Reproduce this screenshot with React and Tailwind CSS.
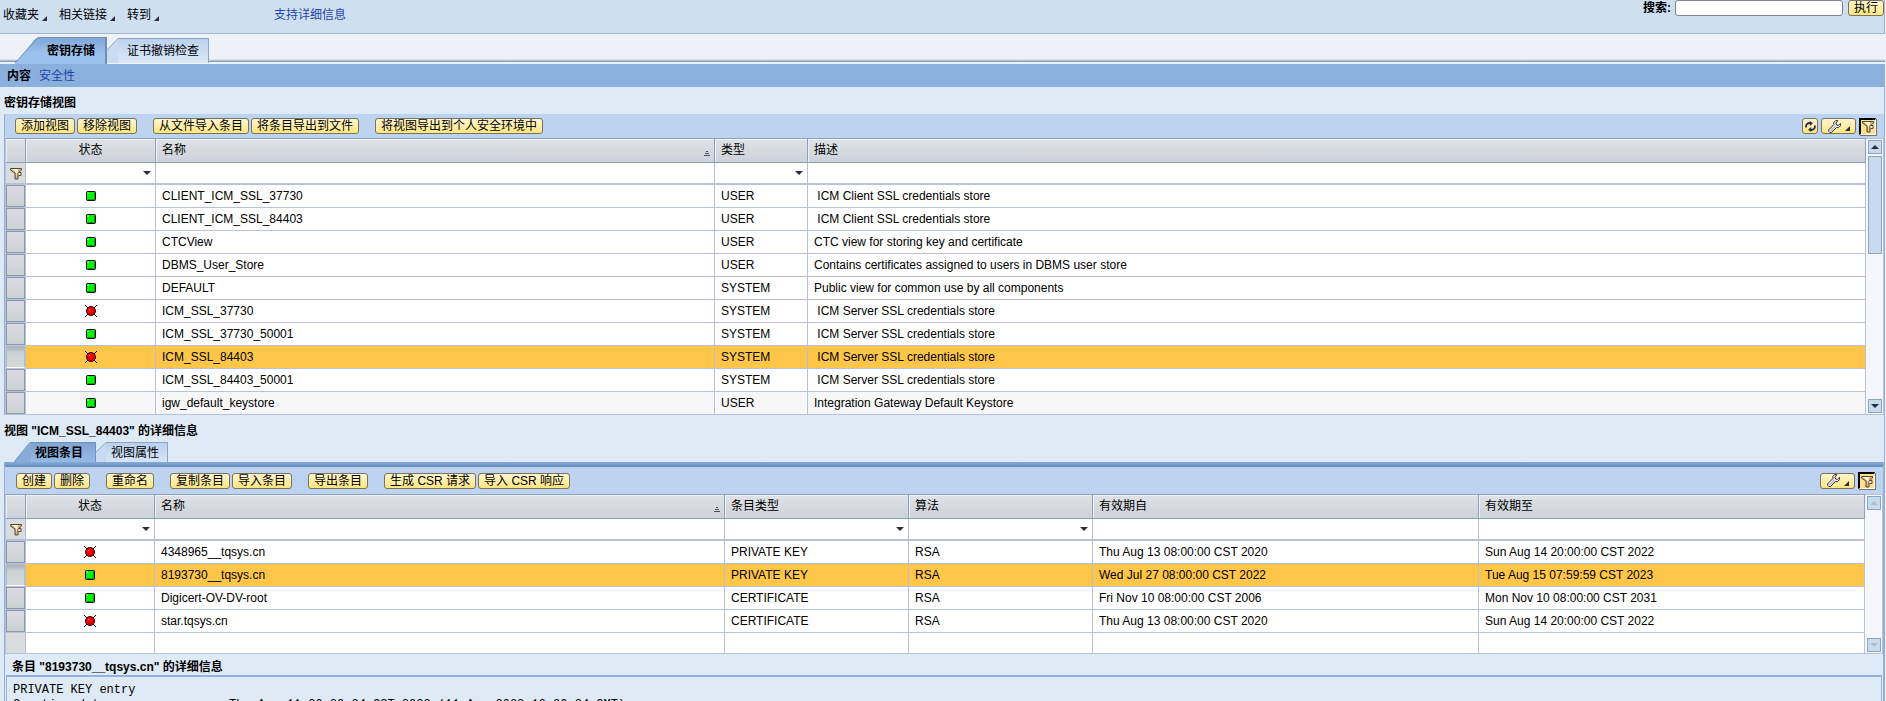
import React, { useState } from 'react';
import clsx from 'clsx';

const views = [
  { ok: true, name: 'CLIENT_ICM_SSL_37730', type: 'USER', desc: ' ICM Client SSL credentials store' },
  { ok: true, name: 'CLIENT_ICM_SSL_84403', type: 'USER', desc: ' ICM Client SSL credentials store' },
  { ok: true, name: 'CTCView', type: 'USER', desc: 'CTC view for storing key and certificate' },
  { ok: true, name: 'DBMS_User_Store', type: 'USER', desc: 'Contains certificates assigned to users in DBMS user store' },
  { ok: true, name: 'DEFAULT', type: 'SYSTEM', desc: 'Public view for common use by all components' },
  { ok: false, name: 'ICM_SSL_37730', type: 'SYSTEM', desc: ' ICM Server SSL credentials store' },
  { ok: true, name: 'ICM_SSL_37730_50001', type: 'SYSTEM', desc: ' ICM Server SSL credentials store' },
  { ok: false, name: 'ICM_SSL_84403', type: 'SYSTEM', desc: ' ICM Server SSL credentials store' },
  { ok: true, name: 'ICM_SSL_84403_50001', type: 'SYSTEM', desc: ' ICM Server SSL credentials store' },
  { ok: true, name: 'igw_default_keystore', type: 'USER', desc: 'Integration Gateway Default Keystore', shaded: true },
];

const entries = [
  { ok: false, name: '4348965__tqsys.cn', type: 'PRIVATE KEY', algo: 'RSA', from: 'Thu Aug 13 08:00:00 CST 2020', to: 'Sun Aug 14 20:00:00 CST 2022' },
  { ok: true, name: '8193730__tqsys.cn', type: 'PRIVATE KEY', algo: 'RSA', from: 'Wed Jul 27 08:00:00 CST 2022', to: 'Tue Aug 15 07:59:59 CST 2023' },
  { ok: true, name: 'Digicert-OV-DV-root', type: 'CERTIFICATE', algo: 'RSA', from: 'Fri Nov 10 08:00:00 CST 2006', to: 'Mon Nov 10 08:00:00 CST 2031' },
  { ok: false, name: 'star.tqsys.cn', type: 'CERTIFICATE', algo: 'RSA', from: 'Thu Aug 13 08:00:00 CST 2020', to: 'Sun Aug 14 20:00:00 CST 2022' },
];

const viewColumns = [
  { key: 'name', label: '名称', width: 'w-[559px]', sorted: true },
  { key: 'type', label: '类型', width: 'w-[93px]', select: true },
  { key: 'desc', label: '描述', width: '' },
];

const entryColumns = [
  { key: 'name', label: '名称', width: 'w-[570px]', sorted: true },
  { key: 'type', label: '条目类型', width: 'w-[184px]', select: true },
  { key: 'algo', label: '算法', width: 'w-[184px]', select: true },
  { key: 'from', label: '有效期自', width: 'w-[386px]' },
  { key: 'to', label: '有效期至', width: '' },
];

const StatusIcon = ({ ok }) =>
  ok ? (
    <svg className="mx-auto block" width="12" height="12" viewBox="0 0 12 12" role="img" aria-label="OK">
      <rect x="1.5" y="1.5" width="9" height="9" rx="1" fill="#00f800" stroke="#000" />
      <path d="M2.5 9.5h7v-7" fill="none" stroke="#00a000" />
      <path d="M3 4V3h1" fill="none" stroke="#c8ffc8" />
    </svg>
  ) : (
    <svg className="mx-auto block" width="12" height="12" viewBox="0 0 12 12" role="img" aria-label="Error">
      <path d="M0 0l12 12M12 0L0 12" stroke="#000" />
      <circle cx="6" cy="6" r="4.5" fill="#f80000" stroke="#200" />
      <path d="M3.5 8.5a3.6 3.6 0 0 0 5.5-4" fill="none" stroke="#b00000" />
      <path d="M4 5.2L5.2 4" stroke="#ffc0c0" />
    </svg>
  );

const FunnelIcon = () => (
  <svg className="block" width="13" height="13" viewBox="0 0 13 13" aria-hidden="true">
    <path d="M.5 1.5h11v1.5L8 6v6H5V6L.5 3z" fill="#e3b95c" stroke="#4a4652" />
    <path d="M2 2h6L6.5 10V6z" fill="#fff6d6" />
    <path d="M8.5 5.5h2.5v3H8.5" fill="#f7ebc4" stroke="#4a4652" />
  </svg>
);

const WrenchIcon = () => (
  <svg className="block" width="13" height="13" viewBox="0 0 13 13" aria-hidden="true">
    <path
      d="M9.8.6H7.6L5.8 2.4v2.2L.7 9.8v1.5l1.2 1.2h1.5l5-4.9h2.2l1.9-1.9V3.5L10.3 5.4 8.6 5 8 3.4z"
      fill="#e3e5ea"
      stroke="#33333f"
    />
    <path d="M2.5 11l5-5" stroke="#9a9ca6" />
  </svg>
);

const RefreshIcon = () => (
  <svg className="block" width="11" height="11" viewBox="0 0 11 11" aria-hidden="true">
    <path d="M1.2 6.5C.6 3.6 2.5 1.8 5.2 2M9.8 4.5c.6 2.9-1.3 4.7-4 4.5" fill="none" stroke="#2b2b4a" strokeWidth="1.8" />
    <path d="M4.8 0L8 2.2 4.8 5zM6.2 6L3 8.8 6.2 11z" fill="#2b2b4a" />
  </svg>
);

const CornerMark = () => (
  <svg className="mb-0.5 block self-end" width="5" height="5" viewBox="0 0 5 5" aria-hidden="true">
    <path d="M5 0v5H0z" fill="#2b2b3c" />
  </svg>
);

const Caret = ({ up, muted }) => (
  <svg className="pointer-events-none block shrink-0" width="8" height="4" viewBox="0 0 8 4" aria-hidden="true">
    <path d={up ? 'M0 4h8L4 0z' : 'M0 0h8L4 4z'} fill={muted ? '#b9bcc6' : '#2b2b3c'} />
  </svg>
);

const Button = ({ children, className, ...props }) => (
  <button
    type="button"
    className={clsx(
      'flex h-4 items-center whitespace-nowrap rounded-[3px] border border-[#77735f] bg-linear-to-b from-[#fff6d0] to-[#ffe57c] hover:to-[#ffd84a]',
      className || 'px-[5px]'
    )}
    {...props}
  >
    {children}
  </button>
);

const ToolbarIcons = ({ refresh }) => (
  <div className="ml-auto flex items-center gap-[3px]">
    {refresh && (
      <Button aria-label="刷新" className="w-4 justify-center">
        <RefreshIcon />
      </Button>
    )}
    <Button aria-label="设置" className="w-[35px] justify-between pr-[5px] pl-1.5">
      <WrenchIcon />
      <CornerMark />
    </Button>
    <button
      type="button"
      aria-label="筛选"
      aria-pressed="true"
      className="flex h-[17px] w-[17px] items-center justify-center border-t-2 border-r border-b border-l-2 border-white border-t-black border-l-black bg-[#ffe08a] shadow-[1px_1px_0_#77735f]"
    >
      <FunnelIcon />
    </button>
  </div>
);

const Toolbar = ({ groups, refresh, className }) => (
  <div className={clsx('flex items-center bg-[#bdd3f0] pr-2', className)}>
    <div className="flex gap-4">
      {groups.map((group, i) => (
        <div key={i} className="flex gap-0.5">
          {group.map((label) => (
            <Button key={label}>{label}</Button>
          ))}
        </div>
      ))}
    </div>
    <ToolbarIcons refresh={refresh} />
  </div>
);

const FilterSelect = ({ label }) => (
  <div className="flex items-center pr-1">
    <select aria-label={label} className="h-5 min-w-0 flex-1 appearance-none bg-transparent outline-none">
      <option></option>
    </select>
    <Caret />
  </div>
);

const ScrollButton = ({ up, muted }) => (
  <button
    type="button"
    aria-label={up ? '向上滚动' : '向下滚动'}
    disabled={muted}
    className="flex h-3.5 w-3.5 shrink-0 items-center justify-center border border-[#8ea5bd] bg-[#c6daf0]"
  >
    <Caret up={up} muted={muted} />
  </button>
);

const ScrollBar = ({ thumb }) => (
  <div className="flex w-[18px] shrink-0 flex-col items-center border-y border-r border-[#b9c1d9] bg-[#f6f7fe] py-px">
    <ScrollButton up muted={!thumb} />
    {thumb && <div className="mt-0.5 h-[98px] w-3.5 border border-[#8ea5bd] bg-[#c6daf0]"></div>}
    <div className="mt-auto">
      <ScrollButton muted={!thumb} />
    </div>
  </div>
);

const headCell = 'h-6 border-r border-b border-[#8ea1bb] px-1.5 pb-0.5 font-normal shadow-[inset_1px_1px_0_#eef1f5]';
const bodyCell = 'h-[23px] truncate whitespace-pre border-r border-b border-[#b9c1d9] px-1.5';
const filterCell = 'h-[22px] border-r border-b-2 border-[#b9c1d9] bg-white p-0';

const DataTable = ({ caption, columns, rows, initial, statusWidth, blank, thumb }) => {
  const [selected, setSelected] = useState(initial);

  return (
    <div className="flex">
      <table
        aria-label={caption}
        className="min-w-0 flex-1 table-fixed border-separate border-spacing-0 border-t border-l border-t-[#8ea1bb] border-l-[#b9c1d9] text-left"
      >
        <colgroup>
          <col className="w-[20px]" />
          <col className={statusWidth} />
          {columns.map((col) => (
            <col key={col.key} className={col.width} />
          ))}
        </colgroup>
        <thead>
          <tr className="bg-linear-to-b from-[#dfe3e8] via-[#d6dade] to-[#cdd0dc]">
            <th className={headCell}></th>
            <th className={clsx(headCell, 'text-center')}>状态</th>
            {columns.map((col) => (
              <th key={col.key} className={headCell}>
                <div className="flex items-center justify-between">
                  {col.label}
                  {col.sorted && (
                    <svg className="-mr-0.5 block self-end" width="6" height="8" viewBox="0 0 6 8" aria-hidden="true">
                      <path d="M2 1.5h2M1 3.5h4M0 5.5h6" stroke="#4a4d5c" />
                    </svg>
                  )}
                </div>
              </th>
            ))}
          </tr>
          <tr>
            <td className="h-[22px] border-r border-b-2 border-[#b9c1d9] bg-[#d8dcdf] pl-1">
              <FunnelIcon />
            </td>
            <td className={filterCell}>
              <FilterSelect label="状态" />
            </td>
            {columns.map((col) => (
              <td key={col.key} className={filterCell}>
                {col.select ? (
                  <FilterSelect label={col.label} />
                ) : (
                  <input aria-label={col.label} className="block h-5 w-full px-1.5 outline-none" />
                )}
              </td>
            ))}
          </tr>
        </thead>
        <tbody>
          {rows.map((row, i) => (
            <tr key={row.name} className={selected === i ? 'bg-[#ffc64a]' : row.shaded ? 'bg-[#f7f7f7]' : 'bg-white'}>
              <td className="h-[23px] border-r border-b border-[#b9c1d9] bg-[#b9c1d9] p-0">
                <button
                  type="button"
                  aria-label={`选择 ${row.name}`}
                  onClick={() => setSelected(i)}
                  className={clsx(
                    'block h-[22px] w-full border bg-linear-to-b',
                    selected === i
                      ? 'border-[#b5bac4] border-b-white from-[#a9afb8] via-[#cdd2d6] via-30% to-[#d3d8da]'
                      : 'border-[#8e98ab] from-[#dcdae4] to-[#cbd2d3]'
                  )}
                ></button>
              </td>
              <td className={bodyCell}>
                <StatusIcon ok={row.ok} />
              </td>
              {columns.map((col) => (
                <td key={col.key} className={bodyCell}>
                  {row[col.key]}
                </td>
              ))}
            </tr>
          ))}
          {blank && (
            <tr className="bg-white">
              <td className="h-[21px] border-r border-b border-[#b9c1d9] bg-[#d8dcdf]"></td>
              <td className="border-r border-b border-[#b9c1d9]"></td>
              {columns.map((col) => (
                <td key={col.key} className="border-r border-b border-[#b9c1d9]"></td>
              ))}
            </tr>
          )}
        </tbody>
      </table>
      <ScrollBar thumb={thumb} />
    </div>
  );
};

const MenuButton = ({ children }) => (
  <button type="button" className="flex items-center gap-[3px]">
    {children}
    <CornerMark />
  </button>
);

const App = () => {
  return (
    <div className="flex h-screen flex-col overflow-hidden bg-[#eef2f8] pr-px font-['Liberation_Sans','Noto_Sans_CJK_SC',sans-serif] text-[12px] leading-4 text-black">
      {/* Header */}
      <header className="flex h-[34px] shrink-0 items-start border-r border-b border-[#a5b5cb] bg-[#cedff0]">
        <nav className="mt-[7px] flex gap-3 pl-[3px]">
          <MenuButton>收藏夹</MenuButton>
          <MenuButton>相关链接</MenuButton>
          <MenuButton>转到</MenuButton>
        </nav>
        <a href="#support" className="mt-[7px] ml-[115px] text-[#1f45a8]">
          支持详细信息
        </a>
        <form className="ml-auto flex items-start" onSubmit={(e) => e.preventDefault()}>
          <label htmlFor="search" className="mr-1 font-bold">
            搜索:
          </label>
          <input
            id="search"
            className="h-4 w-[168px] rounded-[3px] border border-[#7f868f] bg-white px-1 outline-none"
          />
          <div className="ml-[5px]">
            <Button>执行</Button>
          </div>
        </form>
      </header>

      {/* Main tabs */}
      <div className="flex h-[30px] shrink-0 items-end bg-linear-to-t from-[#eef2f8] from-[2px] via-[#7893ad] via-[2px] to-[#eef2f8] to-[5px] pl-[15px]" role="tablist">
        <button type="button" role="tab" aria-selected="true" className="flex h-[27px] items-stretch">
          <svg width="24" height="27" viewBox="0 0 24 27" className="block" aria-hidden="true">
            <defs>
              <linearGradient id="tabActive" x1="0" y1="0" x2="0" y2="1">
                <stop offset="0" stopColor="#7fa6d8" />
                <stop offset="0.6" stopColor="#9cc1ee" />
              </linearGradient>
            </defs>
            <path d="M24 0L20 2 0 27h24z" fill="url(#tabActive)" />
            <path d="M24 .5h-1L0 26" fill="none" stroke="#6f8fb3" />
          </svg>
          <span className="flex items-center border-t border-r-2 border-[#6f8fb3] bg-linear-to-b from-[#7fa6d8] to-[#9cc1ee] to-60% pr-2.5 pl-2 font-bold">
            密钥存储
          </span>
        </button>
        <button type="button" role="tab" aria-selected="false" className="mb-px flex h-[25px] items-stretch">
          <svg width="11" height="25" viewBox="0 0 11 25" className="block" aria-hidden="true">
            <path d="M11 0L0 12v13h11z" fill="#cbdcf2" />
            <path d="M11 .5L0 12" fill="none" stroke="#8ba6c6" />
          </svg>
          <span className="flex items-center border-t border-r border-[#8ba6c6] bg-linear-to-b from-[#bdd2ee] to-[#dbe7f8] pr-[9px] pl-[9px]">
            证书撤销检查
          </span>
        </button>
      </div>

      <div className="flex h-[23px] shrink-0 items-center gap-2 bg-[#8cb0dd] pl-[7px]">
        <span className="font-bold">内容</span>
        <a href="#security" className="text-[#1f45a8]">
          安全性
        </a>
      </div>

      <main className="min-h-0 flex-1 border-r border-[#8fb0dc] bg-[#deeaf6]">
        <h2 className="flex h-[27px] items-center pt-1 pl-1 font-bold">密钥存储视图</h2>
        <section className="ml-1 border-l border-[#8fb0dc]">
          <Toolbar
            refresh
            className="h-6 pl-2.5"
            groups={[['添加视图', '移除视图'], ['从文件导入条目', '将条目导出到文件'], ['将视图导出到个人安全环境中']]}
          />
          <DataTable
            caption="密钥存储视图"
            columns={viewColumns}
            rows={views}
            initial={7}
            statusWidth="w-[130px]"
            thumb
          />
        </section>

        <h2 className="flex h-[27px] items-center pt-1 pl-1 font-bold">视图 "ICM_SSL_84403" 的详细信息</h2>

        {/* View details */}
        <div className="flex h-5 items-stretch pl-3.5" role="tablist">
          <button type="button" role="tab" aria-selected="true" className="flex items-stretch">
            <svg width="17" height="20" viewBox="0 0 17 20" className="block" aria-hidden="true">
              <path d="M17 0L0 20h17z" fill="#86abd8" />
              <path d="M17 .5h-1L0 20" fill="none" stroke="#6f93bd" />
            </svg>
            <span className="flex items-center border-t border-r border-[#6f93bd] bg-linear-to-b from-[#7fa5d3] to-[#94b9e4] pr-3 pl-1 font-bold">
              视图条目
            </span>
          </button>
          <button type="button" role="tab" aria-selected="false" className="flex items-stretch">
            <svg width="10" height="20" viewBox="0 0 10 20" className="block" aria-hidden="true">
              <path d="M10 0L0 10v10h10z" fill="#c6daf3" />
              <path d="M10 .5L0 10" fill="none" stroke="#8ba6c6" />
            </svg>
            <span className="flex items-center border-t border-r border-[#8ba6c6] bg-linear-to-b from-[#b9d0ee] to-[#d6e5f8] pr-2 pl-[5px]">
              视图属性
            </span>
          </button>
        </div>
        <section className="ml-1 border-r border-l border-[#8fb0dc]">
          <div className="h-[5px] bg-linear-to-b from-[#86abd8] to-[#638dbf]"></div>
          <Toolbar
            className="h-[27px] pl-[11px]"
            groups={[
              ['创建', '删除'],
              ['重命名'],
              ['复制条目', '导入条目'],
              ['导出条目'],
              ['生成 CSR 请求', '导入 CSR 响应'],
            ]}
          />
          <DataTable
            caption="视图条目"
            columns={entryColumns}
            rows={entries}
            initial={1}
            statusWidth="w-[129px]"
            blank
          />
          <h3 className="flex h-[21px] items-center pt-1 pl-[7px] font-bold">条目 "8193730__tqsys.cn" 的详细信息</h3>
          <pre className="mx-px border border-t-2 border-[#93b4e0] pt-1.5 pl-1.5 font-['Liberation_Mono',monospace] leading-[15px]">
            {`PRIVATE KEY entry
Creation date                 Thu Aug 11 20:20:24 CST 2022 (11 Aug 2022 12:20:24 GMT)`}
          </pre>
        </section>
      </main>
    </div>
  );
};

export default App;
